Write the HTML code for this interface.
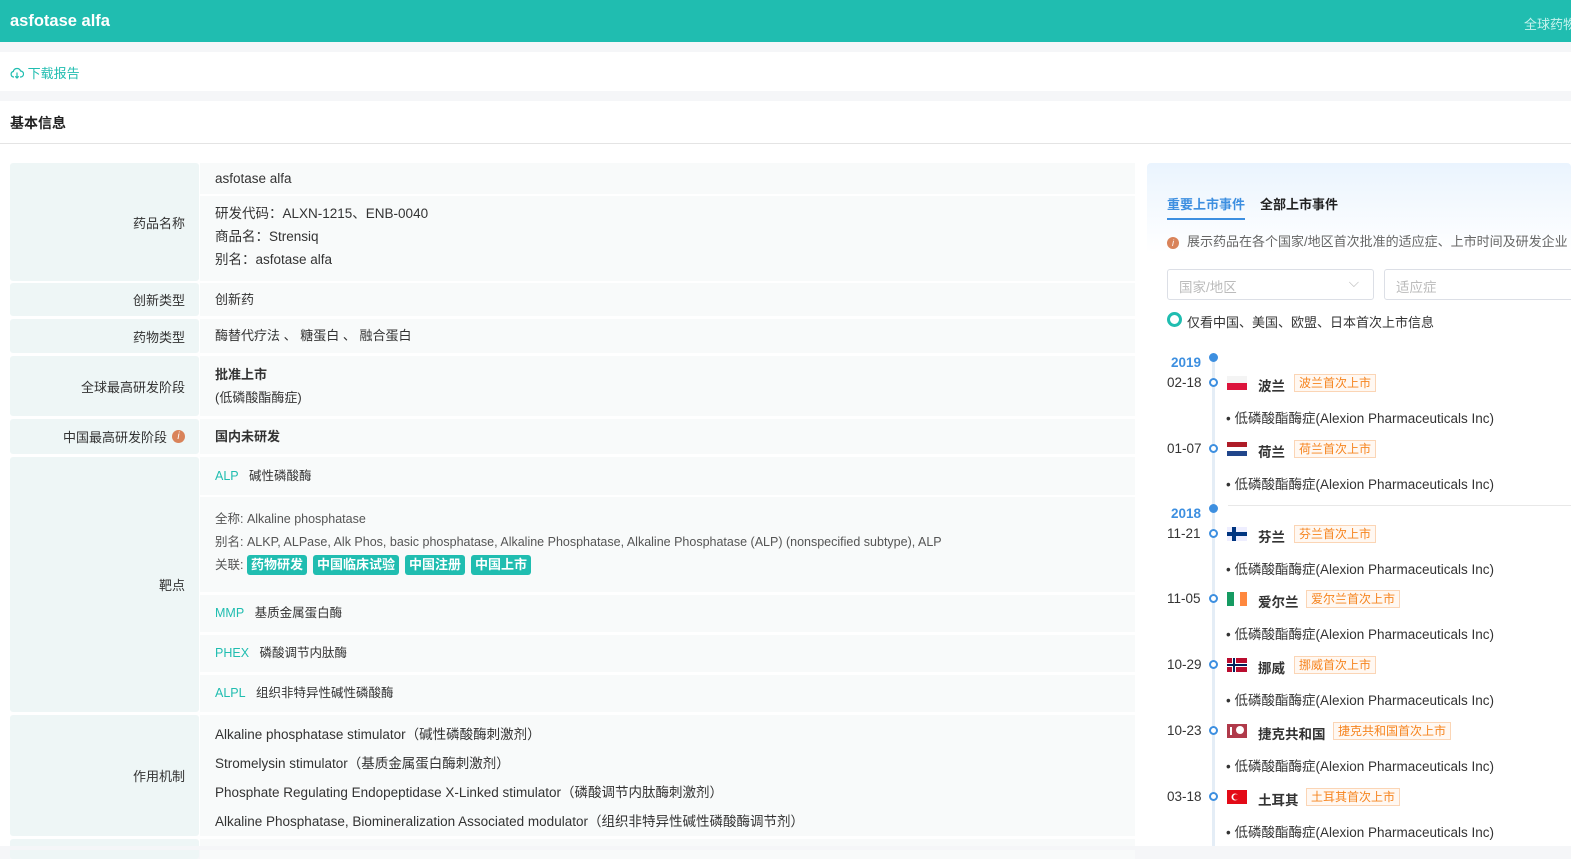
<!DOCTYPE html>
<html><head><meta charset="utf-8"><style>
*{margin:0;padding:0;box-sizing:border-box}
body{width:1571px;height:850px;overflow:hidden;background:#f5f6f8;font-family:"Liberation Sans","Noto Sans CJK SC",sans-serif;font-size:13px;color:#333;position:relative}
.a{position:absolute;white-space:nowrap}
.hdr{left:0;top:0;width:1571px;height:42px;background:#20bdb0}
.lab{position:absolute;left:10px;width:189px;background:#eef6f6;text-align:right;padding-right:14px;font-size:13px;color:#333;display:flex;align-items:center;justify-content:flex-end;border-radius:3px}
.val{position:absolute;left:200px;width:935px;background:#f8fafa;padding-left:15px}
.tag{display:inline-block;background:#20bdb0;color:#fff;font-weight:bold;padding:0 4px;border-radius:3px;height:20px;line-height:20px;margin-right:6px;font-size:13px}
.cy{color:#20bdb0}
.dot{position:absolute;left:1209px;width:9px;height:9px;border-radius:50%;border:2px solid #3d8fe0;background:#fff}
.fd{background:#3d8fe0}
.ot{display:inline-block;border:1px solid #fbd5b5;background:#fff8f2;color:#f6841f;padding:0 4px;height:18px;line-height:16px;font-size:12px}
.flag{position:absolute;left:1227px;width:20px;height:14px}
.tl{font-size:13.5px}
</style></head><body>
<div class="a hdr"></div>
<div class="a" style="left:10px;top:12px;color:#fff;font-weight:bold;font-size:16.5px">asfotase alfa</div>
<div class="a" style="left:1524px;top:14px;color:#c7f3ee;font-size:13px">全球药物</div>
<div class="a" style="left:0;top:52px;width:1571px;height:39px;background:#fff"></div>
<div class="a" style="left:10px;top:63px;color:#20bdb0;font-size:13px"><svg width="14" height="12" viewBox="0 0 14 12" style="vertical-align:-1px"><path d="M4 10H3.5A2.8 2.8 0 0 1 3.3 4.5 3.8 3.8 0 0 1 10.6 4 2.8 2.8 0 0 1 10.5 10H10M7 5.5V11M5.3 9.3 7 11 8.7 9.3" fill="none" stroke="#20bdb0" stroke-width="1.2"/></svg> 下载报告</div>
<div class="a" style="left:0;top:101px;width:1571px;height:749px;background:#fff"></div>
<div class="a" style="left:10px;top:113px;font-weight:bold;font-size:14px;color:#222">基本信息</div>
<div class="a" style="left:0;top:143px;width:1571px;height:1px;background:#e4e4e4"></div>

<div class="lab" style="top:163px;height:118px">药品名称</div>
<div class="val" style="top:163px;height:31px;line-height:31px;font-size:13.5px">asfotase alfa</div>
<div class="val" style="top:196px;height:85px;padding-top:6px;line-height:23px;font-size:13.5px">研发代码：ALXN-1215、ENB-0040<br>商品名：Strensiq<br>别名：asfotase alfa</div>
<div class="lab" style="top:283px;height:33px">创新类型</div>
<div class="val" style="top:283px;height:33px;line-height:33px">创新药</div>
<div class="lab" style="top:319px;height:34px">药物类型</div>
<div class="val" style="top:319px;height:34px;line-height:34px">酶替代疗法 、 糖蛋白 、 融合蛋白</div>
<div class="lab" style="top:356px;height:60px">全球最高研发阶段</div>
<div class="val" style="top:356px;height:60px;padding-top:7px;line-height:23px"><b>批准上市</b><br>(低磷酸酯酶症)</div>
<div class="lab" style="top:419px;height:35px">中国最高研发阶段 <span style="display:inline-block;width:13px;height:13px;border-radius:50%;background:#d9835a;color:#fff;font-size:10px;line-height:13px;text-align:center;font-style:italic;margin-left:5px">i</span></div>
<div class="val" style="top:419px;height:35px;line-height:35px;font-weight:bold">国内未研发</div>
<div class="lab" style="top:457px;height:255px">靶点</div>
<div class="val" style="top:457px;height:38px;line-height:38px;font-size:12.5px"><span class="cy">ALP</span>&nbsp;&nbsp; 碱性磷酸酶</div>
<div class="val" style="top:497px;height:95px;padding-top:11px;line-height:23px;font-size:12.5px;color:#555">全称: Alkaline phosphatase<br>别名: ALKP, ALPase, Alk Phos, basic phosphatase, Alkaline Phosphatase, Alkaline Phosphatase (ALP) (nonspecified subtype), ALP<br>关联: <span class="tag">药物研发</span><span class="tag">中国临床试验</span><span class="tag">中国注册</span><span class="tag">中国上市</span></div>
<div class="val" style="top:595px;height:37px;line-height:37px;font-size:12.5px"><span class="cy">MMP</span>&nbsp;&nbsp; 基质金属蛋白酶</div>
<div class="val" style="top:635px;height:37px;line-height:37px;font-size:12.5px"><span class="cy">PHEX</span>&nbsp;&nbsp; 磷酸调节内肽酶</div>
<div class="val" style="top:675px;height:37px;line-height:37px;font-size:12.5px"><span class="cy">ALPL</span>&nbsp;&nbsp; 组织非特异性碱性磷酸酶</div>
<div class="lab" style="top:715px;height:121px">作用机制</div>
<div class="val" style="top:715px;height:121px;padding-top:5px;line-height:29px;font-size:13.5px">Alkaline phosphatase stimulator（碱性磷酸酶刺激剂）<br>Stromelysin stimulator（基质金属蛋白酶刺激剂）<br>Phosphate Regulating Endopeptidase X-Linked stimulator（磷酸调节内肽酶刺激剂）<br>Alkaline Phosphatase, Biomineralization Associated modulator（组织非特异性碱性磷酸酶调节剂）</div>
<div class="lab" style="top:839px;height:20px"></div><div class="val" style="top:839px;height:20px"></div>

<div class="a" style="left:1147px;top:163px;width:424px;height:687px;background:linear-gradient(#eaf4fe,#fff 90px);border-radius:4px"></div>
<div class="a" style="left:1167px;top:194px;color:#3d8fe0;font-weight:bold;font-size:13px">重要上市事件</div>
<div class="a" style="left:1167px;top:218px;width:78px;height:2px;background:#3d8fe0"></div>
<div class="a" style="left:1260px;top:194px;color:#222;font-weight:bold;font-size:13px">全部上市事件</div>
<div class="a" style="left:1167px;top:231px;color:#666;font-size:13px"><span style="display:inline-block;width:12px;height:12px;border-radius:50%;background:#d9835a;color:#fff;font-size:9px;line-height:12px;text-align:center;font-style:italic;margin-right:8px">i</span>展示药品在各个国家/地区首次批准的适应症、上市时间及研发企业</div>
<div class="a" style="left:1167px;top:269px;width:207px;height:31px;border:1px solid #dcdfe6;border-radius:3px;background:#fff;color:#bbb;padding:6px 11px;font-size:13.5px">国家/地区<span style="position:absolute;right:14px;top:5px;color:#bbb">⌵</span></div>
<div class="a" style="left:1384px;top:269px;width:200px;height:31px;border:1px solid #dcdfe6;border-radius:3px;background:#fff;color:#bbb;padding:6px 11px;font-size:13.5px">适应症</div>
<div class="a" style="left:1167px;top:312px;width:15px;height:15px;border:3px solid #20bdb0;border-radius:50%"></div>
<div class="a" style="left:1187px;top:312px;font-size:13px;color:#333">仅看中国、美国、欧盟、日本首次上市信息</div>

<div class="a" style="left:1212px;top:358px;width:3px;height:492px;background:#e4edf6"></div>
<div class="a" style="left:1228px;top:505px;width:343px;height:1px;background:#e8e8e8"></div>
<div class="dot fd" style="top:353px"></div><div class="a tl" style="left:1171px;top:355px;color:#3d8fe0;font-weight:bold">2019</div>
<div class="dot fd" style="top:504px"></div><div class="a tl" style="left:1171px;top:506px;color:#3d8fe0;font-weight:bold">2018</div>

<div class="dot" style="top:378px"></div><div class="a tl" style="left:1167px;top:375px">02-18</div>
<svg class="flag" style="top:376px" viewBox="0 0 20 14"><rect width="20" height="7" fill="#f4f4f4"/><rect y="7" width="20" height="7" fill="#dc143c"/></svg>
<div class="a tl" style="left:1258px;top:375px;font-weight:bold">波兰</div><div class="a" style="left:1294px;top:374px"><span class="ot">波兰首次上市</span></div>
<div class="a tl" style="left:1226px;top:407px">• 低磷酸酯酶症(Alexion Pharmaceuticals Inc)</div>

<div class="dot" style="top:444px"></div><div class="a tl" style="left:1167px;top:441px">01-07</div>
<svg class="flag" style="top:442px" viewBox="0 0 20 14"><rect width="20" height="5" fill="#ae1c28"/><rect y="5" width="20" height="4" fill="#fff"/><rect y="9" width="20" height="5" fill="#21468b"/></svg>
<div class="a tl" style="left:1258px;top:441px;font-weight:bold">荷兰</div><div class="a" style="left:1294px;top:440px"><span class="ot">荷兰首次上市</span></div>
<div class="a tl" style="left:1226px;top:473px">• 低磷酸酯酶症(Alexion Pharmaceuticals Inc)</div>

<div class="dot" style="top:529px"></div><div class="a tl" style="left:1167px;top:526px">11-21</div>
<svg class="flag" style="top:527px" viewBox="0 0 20 14"><rect width="20" height="14" fill="#eef"/><rect x="5" width="4" height="14" fill="#003580"/><rect y="5" width="20" height="4" fill="#003580"/></svg>
<div class="a tl" style="left:1258px;top:526px;font-weight:bold">芬兰</div><div class="a" style="left:1294px;top:525px"><span class="ot">芬兰首次上市</span></div>
<div class="a tl" style="left:1226px;top:558px">• 低磷酸酯酶症(Alexion Pharmaceuticals Inc)</div>

<div class="dot" style="top:594px"></div><div class="a tl" style="left:1167px;top:591px">11-05</div>
<svg class="flag" style="top:592px" viewBox="0 0 20 14"><rect width="7" height="14" fill="#169b62"/><rect x="7" width="6" height="14" fill="#fff"/><rect x="13" width="7" height="14" fill="#ff883e"/></svg>
<div class="a tl" style="left:1258px;top:591px;font-weight:bold">爱尔兰</div><div class="a" style="left:1306px;top:590px"><span class="ot">爱尔兰首次上市</span></div>
<div class="a tl" style="left:1226px;top:623px">• 低磷酸酯酶症(Alexion Pharmaceuticals Inc)</div>

<div class="dot" style="top:660px"></div><div class="a tl" style="left:1167px;top:657px">10-29</div>
<svg class="flag" style="top:658px" viewBox="0 0 20 14"><rect width="20" height="14" fill="#ba0c2f"/><rect x="5" width="4" height="14" fill="#fff"/><rect y="5" width="20" height="4" fill="#fff"/><rect x="6" width="2" height="14" fill="#00205b"/><rect y="6" width="20" height="2" fill="#00205b"/></svg>
<div class="a tl" style="left:1258px;top:657px;font-weight:bold">挪威</div><div class="a" style="left:1294px;top:656px"><span class="ot">挪威首次上市</span></div>
<div class="a tl" style="left:1226px;top:689px">• 低磷酸酯酶症(Alexion Pharmaceuticals Inc)</div>

<div class="dot" style="top:726px"></div><div class="a tl" style="left:1167px;top:723px">10-23</div>
<svg class="flag" style="top:724px" viewBox="0 0 20 14"><rect width="20" height="14" fill="#b03a4a"/><circle cx="13" cy="6" r="4" fill="#fff"/><rect x="3" y="3" width="2" height="8" fill="#fff"/></svg>
<div class="a tl" style="left:1258px;top:723px;font-weight:bold">捷克共和国</div><div class="a" style="left:1333px;top:722px"><span class="ot">捷克共和国首次上市</span></div>
<div class="a tl" style="left:1226px;top:755px">• 低磷酸酯酶症(Alexion Pharmaceuticals Inc)</div>

<div class="dot" style="top:792px"></div><div class="a tl" style="left:1167px;top:789px">03-18</div>
<svg class="flag" style="top:790px" viewBox="0 0 20 14"><rect width="20" height="14" fill="#e30a17"/><circle cx="8" cy="7" r="3.5" fill="#fff"/><circle cx="9" cy="7" r="2.8" fill="#e30a17"/></svg>
<div class="a tl" style="left:1258px;top:789px;font-weight:bold">土耳其</div><div class="a" style="left:1306px;top:788px"><span class="ot">土耳其首次上市</span></div>
<div class="a tl" style="left:1226px;top:821px">• 低磷酸酯酶症(Alexion Pharmaceuticals Inc)</div>
<div class="a" style="left:0;top:846px;width:1571px;height:4px;background:#f5f6f8"></div>
</body></html>
